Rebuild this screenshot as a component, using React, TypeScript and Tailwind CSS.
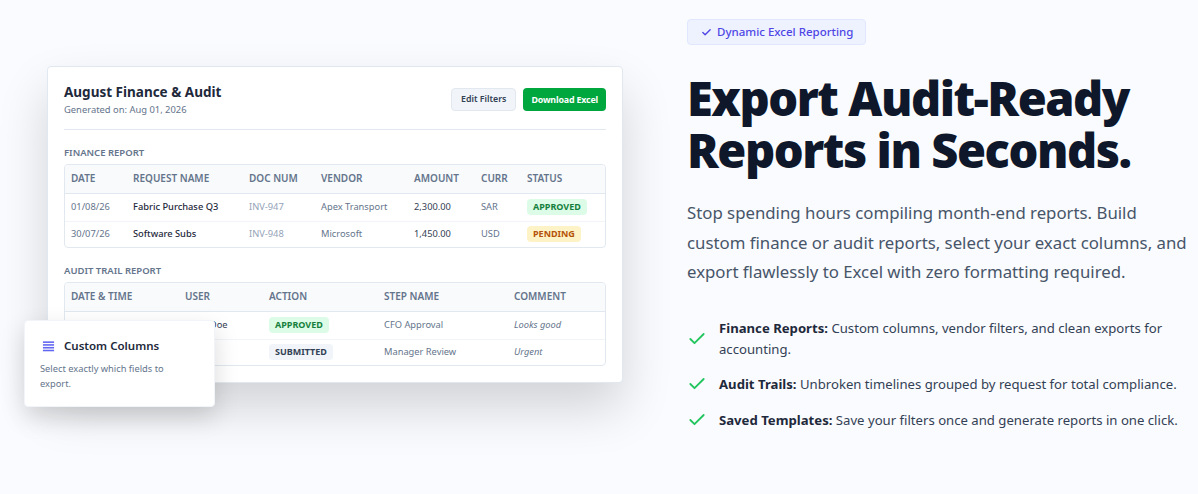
import React from "react";

const headCls = "h-[28px] px-[6px] text-left text-[10px] font-semibold text-[#64748b] bg-[#f8fafc] border-b border-[#e2e8f0] whitespace-nowrap";
const cellCls = "h-[28px] px-[6px] text-[9.3px] whitespace-nowrap border-b border-[#f1f5f9]";
const lastCls = "h-[26px] px-[6px] text-[9.3px] whitespace-nowrap";

function Badge({ tone, children }: { tone: "green" | "yellow" | "slate"; children: React.ReactNode }) {
  const c = tone === "green" ? "bg-[#dcfce7] text-[#15803d]" : tone === "yellow" ? "bg-[#fef3c7] text-[#b45309]" : "bg-[#f1f5f9] text-[#334155]";
  return <span className={`inline-block rounded-[4px] px-[6px] py-[1px] text-[9px] font-bold leading-[14px] ${c}`}>{children}</span>;
}

function Check({ className, width }: { className: string; width: number }) {
  return (
    <svg viewBox="0 0 24 24" fill="none" stroke="currentColor" strokeWidth={width} strokeLinecap="round" strokeLinejoin="round" className={className}>
      <path d="M20 6 9 17l-5-5" />
    </svg>
  );
}

function Feature({ title, text, className }: { title: string; text: string; className?: string }) {
  return (
    <li className={`flex items-center gap-[12px] ${className ?? ""}`}>
      <Check width={2.2} className="h-[20px] w-[20px] shrink-0 text-[#22c55e]" />
      <p className="text-[13.15px] leading-[21px] text-[#334155]"><strong className="font-bold text-[#1e293b]">{title}</strong> {text}</p>
    </li>
  );
}

export default function App() {
  return (
    <div className="flex h-[494px] w-[1198px] items-start gap-[64px] overflow-hidden bg-[#fafbfe] pl-[47px] font-['Noto_Sans',sans-serif]">
      <div className="relative mt-[66px] h-[317px] w-[576px] shrink-0 rounded-[4px] border border-[#e2e8f0] bg-white px-[16px] pt-[15px] shadow-[0_25px_50px_rgba(0,0,0,0.16)]">
        <div className="flex items-center justify-between border-b border-[#e2e8f0] pb-[12px]">
          <div>
            <h3 className="text-[13.5px] font-bold leading-[20px] text-[#1e293b]">August Finance &amp; Audit</h3>
            <p className="pt-[1px] text-[9.4px] leading-[14px] text-[#64748b]">Generated on: Aug 01, 2026</p>
          </div>
          <div className="flex items-center gap-[7px]">
            <span className="rounded-[4px] border border-[#e2e8f0] bg-[#f1f5f9] px-[9px] py-[3px] text-[8.8px] font-semibold leading-[15px] text-[#334155]">Edit Filters</span>
            <span className="rounded-[4px] bg-[#00a63e] px-[8px] py-[4px] text-[8.9px] font-bold leading-[15px] tracking-[-0.02em] text-white">Download Excel</span>
          </div>
        </div>

        <h4 className="mt-[16px] text-[9.5px] font-semibold leading-[13px] text-[#64748b]">FINANCE REPORT</h4>
        <div className="mt-[5px] overflow-hidden rounded-[4px] border border-[#e2e8f0]">
          <table className="w-full table-fixed border-collapse">
            <colgroup>
              <col className="w-[62px]" /><col className="w-[116px]" /><col className="w-[72px]" /><col className="w-[93px]" /><col className="w-[67px]" /><col className="w-[46px]" /><col />
            </colgroup>
            <thead>
              <tr>{["DATE", "REQUEST NAME", "DOC NUM", "VENDOR", "AMOUNT", "CURR", "STATUS"].map((h) => <th key={h} className={headCls}>{h}</th>)}</tr>
            </thead>
            <tbody>
              <tr>
                <td className={`${cellCls} text-[#64748b]`}>01/08/26</td>
                <td className={`${cellCls} font-medium text-[#1e293b]`}>Fabric Purchase Q3</td>
                <td className={`${cellCls} text-[#94a3b8]`}>INV-947</td>
                <td className={`${cellCls} text-[#64748b]`}>Apex Transport</td>
                <td className={`${cellCls} text-[#334155]`}>2,300.00</td>
                <td className={`${cellCls} text-[#64748b]`}>SAR</td>
                <td className={cellCls}><Badge tone="green">APPROVED</Badge></td>
              </tr>
              <tr>
                <td className={`${lastCls} text-[#64748b]`}>30/07/26</td>
                <td className={`${lastCls} font-medium text-[#1e293b]`}>Software Subs</td>
                <td className={`${lastCls} text-[#94a3b8]`}>INV-948</td>
                <td className={`${lastCls} text-[#64748b]`}>Microsoft</td>
                <td className={`${lastCls} text-[#334155]`}>1,450.00</td>
                <td className={`${lastCls} text-[#64748b]`}>USD</td>
                <td className={lastCls}><Badge tone="yellow">PENDING</Badge></td>
              </tr>
            </tbody>
          </table>
        </div>

        <h4 className="mt-[16px] text-[9.5px] font-semibold leading-[13px] text-[#64748b]">AUDIT TRAIL REPORT</h4>
        <div className="mt-[5px] overflow-hidden rounded-[4px] border border-[#e2e8f0]">
          <table className="w-full table-fixed border-collapse">
            <colgroup>
              <col className="w-[114px]" /><col className="w-[84px]" /><col className="w-[115px]" /><col className="w-[130px]" /><col />
            </colgroup>
            <thead>
              <tr>{["DATE & TIME", "USER", "ACTION", "STEP NAME", "COMMENT"].map((h) => <th key={h} className={headCls}>{h}</th>)}</tr>
            </thead>
            <tbody>
              <tr>
                <td className={`${cellCls} text-[#64748b]`}>01/08/26 14:30</td>
                <td className={`${cellCls} text-[#334155]`}>Mark Doe</td>
                <td className={cellCls}><Badge tone="green">APPROVED</Badge></td>
                <td className={`${cellCls} text-[#64748b]`}>CFO Approval</td>
                <td className={`${cellCls} italic text-[#64748b]`}>Looks good</td>
              </tr>
              <tr>
                <td className={`${lastCls} text-[#64748b]`}>30/07/26 09:15</td>
                <td className={`${lastCls} text-[#334155]`}>Alice</td>
                <td className={lastCls}><Badge tone="slate">SUBMITTED</Badge></td>
                <td className={`${lastCls} text-[#64748b]`}>Manager Review</td>
                <td className={`${lastCls} italic text-[#64748b]`}>Urgent</td>
              </tr>
            </tbody>
          </table>
        </div>

        <div className="absolute left-[-24px] top-[253px] h-[87px] w-[191px] rounded-[4px] border border-[#f1f5f9] bg-white p-[16px] shadow-[0_10px_25px_rgba(0,0,0,0.15)]">
          <div className="flex items-center gap-[9px] pl-[1px]">
            <svg viewBox="0 0 14 12" className="h-[12px] w-[13px] shrink-0 text-[#6366f1]" fill="currentColor">
              <rect x="1" y="1" width="12" height="1.7" /><rect x="1" y="4" width="12" height="1.7" /><rect x="1" y="7" width="12" height="1.7" /><rect x="1" y="10" width="12" height="1.7" />
            </svg>
            <span className="text-[11.5px] font-semibold leading-[18px] text-[#1e293b]">Custom Columns</span>
          </div>
          <p className="-ml-[1px] mt-[6px] text-[9.3px] leading-[15px] text-[#64748b]">Select exactly which fields to<br />export.</p>
        </div>
      </div>

      <div className="mt-[19px] w-[510px] shrink-0">
        <div className="inline-flex h-[26px] items-center gap-[5px] rounded-[4px] border border-[#e0e7ff] bg-[#eef2ff] px-[13px] pr-[12px] text-[11.5px] font-medium text-[#4f46e5]">
          <Check width={3} className="h-[11px] w-[11px]" />
          Dynamic Excel Reporting
        </div>
        <h1 className="mt-[27px] text-[47px] font-black leading-[52px] tracking-[-1.45px] text-[#0f172a]">Export Audit-Ready<br />Reports in Seconds.</h1>
        <p className="mt-[22px] text-[16.8px] leading-[29.5px] text-[#475569]">Stop spending hours compiling month-end reports. Build<br />custom finance or audit reports, select your exact columns, and<br />export flawlessly to Excel with zero formatting required.</p>
        <ul className="mt-[31px]">
          <Feature title="Finance Reports:" text="Custom columns, vendor filters, and clean exports for accounting." />
          <Feature className="mt-[14px]" title="Audit Trails:" text="Unbroken timelines grouped by request for total compliance." />
          <Feature className="mt-[15px]" title="Saved Templates:" text="Save your filters once and generate reports in one click." />
        </ul>
      </div>
    </div>
  );
}
